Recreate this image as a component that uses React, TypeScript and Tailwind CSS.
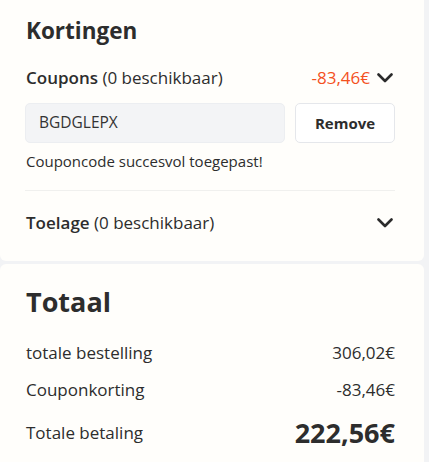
import React from "react";

function Chevron() {
  return (
    <svg width="16" height="10" viewBox="0 0 16 10" fill="none" className="shrink-0">
      <polyline points="1.5,1.5 8,8 14.5,1.5" stroke="#2b2b2b" strokeWidth="2.6" strokeLinecap="round" strokeLinejoin="round" />
    </svg>
  );
}

export default function App() {
  return (
    <div
      className="w-[429px] h-[462px] overflow-hidden bg-[#f2f3f5] flex flex-col gap-[3px] text-[#2d2d2d]"
      style={{ fontFamily: '"Open Sans", "Noto Sans", sans-serif' }}
    >
      <div className="w-[424px] bg-[#fffefb] rounded-br-[6px] rounded-bl-[6px] pl-[26px] pr-[29px] pt-[16px] pb-[26px] flex flex-col">
        <h2 className="text-[22.5px] leading-[30px] font-bold">Kortingen</h2>
        <div className="mt-[20px] flex items-center justify-between h-[24px]">
          <div className="text-[17px] leading-[24px]">
            <span className="font-semibold">Coupons</span> (0 beschikbaar)
          </div>
          <div className="flex items-center gap-[7px] mr-[2px]">
            <span className="text-[17px] leading-[24px] text-[#f4511e]">-83,46€</span>
            <Chevron />
          </div>
        </div>
        <div className="mt-[13px] flex gap-[10px] -ml-[1px]">
          <div className="w-[260px] h-[40px] rounded-[5px] bg-[#f3f4f6] border border-[#eceef1] flex items-center pl-[13px] text-[15.5px] text-[#333]">
            BGDGLEPX
          </div>
          <button className="w-[100px] h-[40px] rounded-[5px] bg-white border border-[#e5e7eb] text-[15px] font-bold text-[#2d2d2d]">
            Remove
          </button>
        </div>
        <p className="mt-[8px] text-[15px] leading-[20px]">Couponcode succesvol toegepast!</p>
        <div className="mt-[19px] h-px bg-[#f0f0ee] -ml-[1px]" />
        <div className="mt-[20px] flex items-center justify-between h-[24px]">
          <div className="text-[17px] leading-[24px]">
            <span className="font-semibold">Toelage</span> (0 beschikbaar)
          </div>
          <div className="mr-[2px]">
            <Chevron />
          </div>
        </div>
      </div>
      <div className="w-[424px] flex-1 bg-[#fffefb] rounded-tr-[6px] rounded-tl-[6px] pl-[26px] pr-[29px] pt-[19px] flex flex-col">
        <h2 className="text-[27px] leading-[38px] font-bold">Totaal</h2>
        <div className="mt-[20px] flex items-center justify-between text-[17px] leading-[24px]">
          <span>totale bestelling</span>
          <span>306,02€</span>
        </div>
        <div className="mt-[13px] flex items-center justify-between text-[17px] leading-[24px]">
          <span>Couponkorting</span>
          <span>-83,46€</span>
        </div>
        <div className="mt-[12px] flex items-center justify-between h-[38px]">
          <span className="text-[17px] leading-[24px]">Totale betaling</span>
          <span className="text-[27px] leading-[38px] font-bold">222,56€</span>
        </div>
      </div>
    </div>
  );
}
